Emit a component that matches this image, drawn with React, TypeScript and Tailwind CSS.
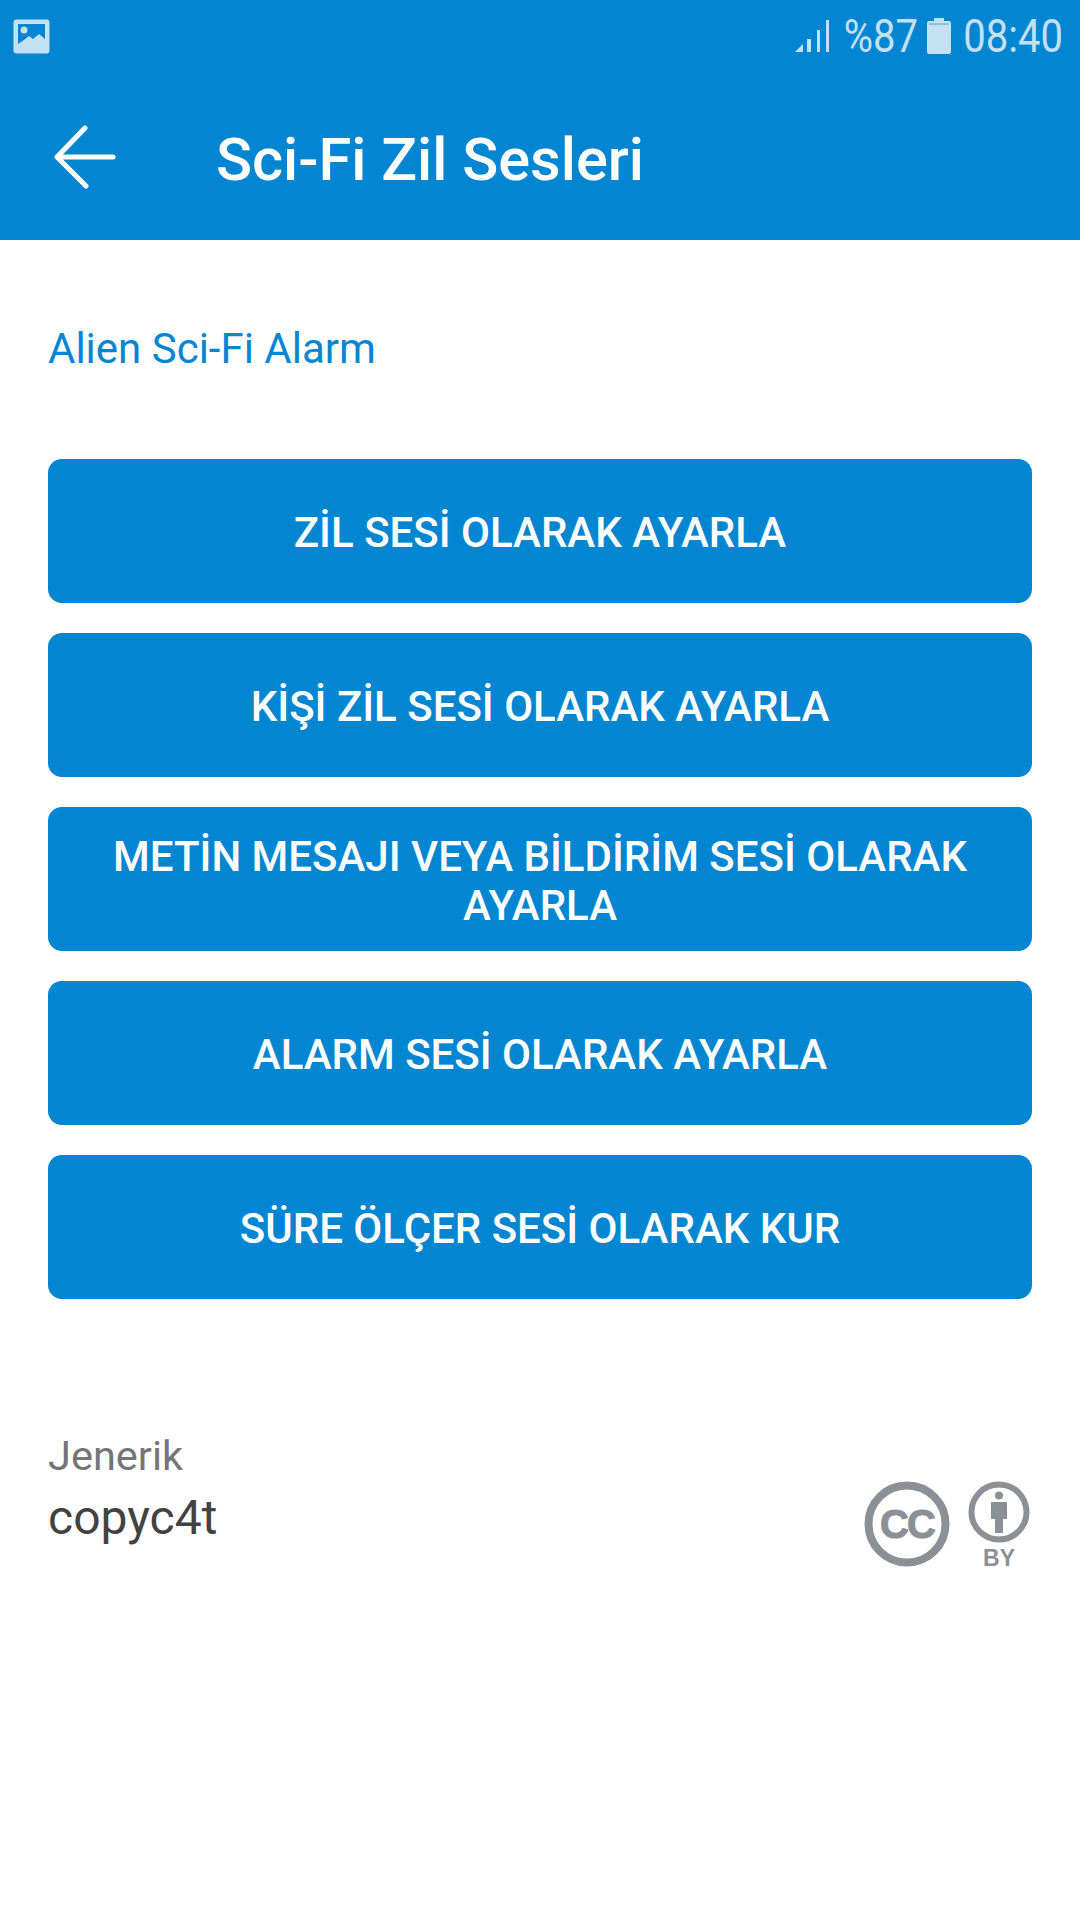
const buttons = [
  'ZİL SESİ OLARAK AYARLA',
  'KİŞİ ZİL SESİ OLARAK AYARLA',
  'METİN MESAJI VEYA BİLDİRİM SESİ OLARAK AYARLA',
  'ALARM SESİ OLARAK AYARLA',
  'SÜRE ÖLÇER SESİ OLARAK KUR',
]

const App = () => {
  return (
    <div className="w-[1080px] h-[1920px] bg-white flex flex-col font-['Roboto',sans-serif]">
      <header className="bg-[#0286d1] h-[240px] flex flex-col">
        <div className="h-[72px] flex items-center justify-between pl-[13px] pr-[17px] text-[#c4e1f4]">
          <svg width="37" height="35" viewBox="0 0 37 35">
            <rect width="36" height="34" x="0.5" y="0.5" rx="3" fill="#c4e1f4" />
            <path d="M5 5h27v15l-6-5-6 5-4-3-5 4-6 4z" fill="#0286d1" />
            <circle cx="11" cy="11" r="3.5" fill="#c4e1f4" />
          </svg>
          <div className="flex items-center">
            <svg width="36" height="36" viewBox="0 0 36 36" className="mr-[17px]">
              <path d="M1 34l8-8v8z" fill="#c4e1f4" />
              <rect x="13" y="21" width="4" height="13" fill="#c4e1f4" />
              <rect x="23" y="12" width="3" height="22" fill="#c4e1f4" />
              <rect x="32" y="2" width="3" height="32" fill="#c4e1f4" />
            </svg>
            <span className="w-[71px] flex justify-end whitespace-nowrap text-[46px] leading-none scale-x-[0.87] origin-right">%87</span>
            <svg width="24" height="36" viewBox="0 0 24 36" className="ml-[9px] mr-[13px]">
              <path d="M7 0h10v3h5a2 2 0 0 1 2 2v29a2 2 0 0 1-2 2H2a2 2 0 0 1-2-2V5a2 2 0 0 1 2-2h5z" fill="#c4e1f4" />
              <rect x="2" y="5" width="20" height="2" fill="#8fc3e6" />
            </svg>
            <span className="w-[99px] flex justify-end whitespace-nowrap text-[46px] leading-none scale-x-[0.87] origin-right">08:40</span>
          </div>
        </div>
        <div className="flex-1 flex items-center pt-[2px]">
          <svg width="64" height="64" viewBox="0 0 64 64" className="ml-[53px] shrink-0" fill="none" stroke="white" strokeWidth="5" strokeLinecap="round" strokeLinejoin="round">
            <path d="M60 32H4M32 3L4 32l29 29" />
          </svg>
          <h1 className="ml-[99px] mt-[7px] text-[59.5px] leading-none font-medium text-white">Sci-Fi Zil Sesleri</h1>
        </div>
      </header>

      <main className="flex-1 px-[48px]">
        <p className="mt-[85px] text-[42px] leading-[48px] text-[#0286d1]">Alien Sci-Fi Alarm</p>

        <div className="mt-[86px] flex flex-col gap-[30px]">
          {buttons.map((label) => (
            <button
              key={label}
              className="h-[144px] rounded-[14px] bg-[#0286d1] px-[48px] pt-[3px] text-center text-[42px] leading-[49px] font-medium text-white"
            >
              {label}
            </button>
          ))}
        </div>

        <div className="mt-[129px] flex items-start justify-between">
          <div>
            <p className="pb-[4px] text-[41.5px] leading-[56px] text-[#757575]">Jenerik</p>
            <p className="text-[48px] leading-[60px] text-[#424242]">copyc4t</p>
          </div>
          <div className="flex items-start pt-[53px] pr-[2px]">
            <svg width="86" height="86" viewBox="0 0 86 86">
              <circle cx="43" cy="43" r="38.5" fill="none" stroke="#8b8f96" strokeWidth="8" />
              <text x="43" y="57" textAnchor="middle" fontFamily="Liberation Sans" fontWeight="700" fontSize="40" letterSpacing="-2" stroke="#8b8f96" strokeWidth="1" fill="#8b8f96">CC</text>
            </svg>
            <div className="ml-[18px] flex flex-col items-center">
              <svg width="62" height="62" viewBox="0 0 62 62">
                <circle cx="31" cy="31" r="27.5" fill="none" stroke="#8b8f96" strokeWidth="6" />
                <circle cx="31" cy="14.5" r="4" fill="#8b8f96" />
                <path d="M23 21h16v17h-4v14h-8V38h-4z" fill="#8b8f96" />
              </svg>
              <span className="mt-[3px] text-[23px] leading-[24px] font-bold text-[#8b8f96] font-['Liberation_Sans',sans-serif]">BY</span>
            </div>
          </div>
        </div>
      </main>
    </div>
  )
}

export default App
